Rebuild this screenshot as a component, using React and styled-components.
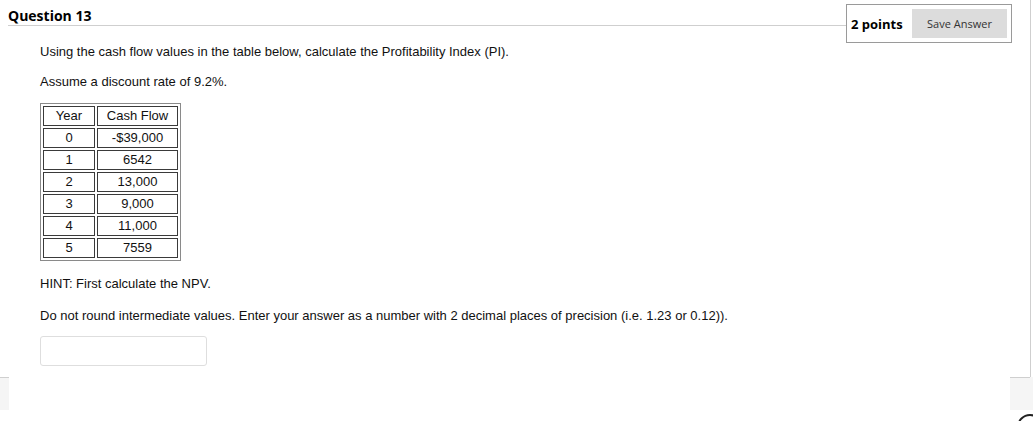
import styled, { createGlobalStyle } from "styled-components";

const GlobalStyle = createGlobalStyle`
    html, body {
        margin: 0;
        padding: 0;
        background: #fff;
    }
    body {
        font-family: "Liberation Sans", Arial, sans-serif;
        color: #111;
        overflow: hidden;
    }
`;

const Page = styled.div`
    width: 1033px;
    height: 421px;
    position: relative;
    overflow: hidden;
`;

const QuestionBlock = styled.section`
    width: 1031px;
    height: 377px;
    box-sizing: border-box;
    border-right: 1px solid #cfcfcf;
`;

const Header = styled.header`
    display: flex;
    align-items: flex-start;
    padding-left: 8px;
    padding-right: 18px;
`;

const TitleBar = styled.div`
    flex: 1;
    height: 26px;
    box-sizing: border-box;
    border-bottom: 1px solid #cfcfcf;
    display: flex;
    align-items: center;
`;

const Title = styled.h2`
    margin: 0;
    padding-top: 5px;
    font-family: "Open Sans", sans-serif;
    font-size: 14px;
    font-weight: 700;
    color: #000;
`;

const PointsBox = styled.div`
    margin-top: 4px;
    width: 166px;
    height: 39px;
    box-sizing: border-box;
    border: 1px solid #9a9a9a;
    display: flex;
    align-items: center;
    justify-content: space-between;
    padding: 0 4px 0 4px;
`;

const Points = styled.span`
    font-family: "Open Sans", sans-serif;
    font-size: 13px;
    font-weight: 700;
    color: #000;
`;

const SaveButton = styled.button`
    width: 95px;
    height: 29px;
    border: none;
    background: #dcdcdc;
    color: #333;
    font-family: "Open Sans", sans-serif;
    font-size: 11px;
    padding: 0;
`;

const Body = styled.div`
    padding-left: 40px;
    padding-top: 1px;
    font-size: 13px;
    line-height: 16px;
`;

const Para = styled.p`
    margin: 0 0 ${p => p.$gap}px 0;
`;

const Table = styled.table`
    border: 1px solid #8a8a8a;
    border-spacing: 2px;
    margin-bottom: 15px;
    font-size: 13px;
`;

const Cell = styled.td`
    border: 1px solid #3a3a3a;
    height: 18px;
    padding: 0;
    text-align: center;
    width: ${p => p.$w}px;
    line-height: 18px;
`;

const AnswerInput = styled.input`
    display: block;
    width: 167px;
    height: 30px;
    box-sizing: border-box;
    border: 1px solid #dedede;
    border-radius: 3px;
    margin: 0;
`;

const Band = styled.div`
    display: flex;
    height: 33px;
    background: #f5f5f5;
`;

const Edge = styled.div`
    width: ${p => p.$w}px;
    border-top: ${p => (p.$line ? "1px solid #cfcfcf" : "none")};
`;

const Panel = styled.div`
    width: 1001px;
    background: #fff;
`;

const FloatIcon = styled.svg`
    position: absolute;
    left: 1015px;
    top: 412px;
`;

const rows = [
    ["0", "-$39,000"],
    ["1", "6542"],
    ["2", "13,000"],
    ["3", "9,000"],
    ["4", "11,000"],
    ["5", "7559"]
];

const App = () => {
    return (
        <Page>
            <GlobalStyle />
            <QuestionBlock>
                <Header>
                    <TitleBar>
                        <Title>Question 13</Title>
                    </TitleBar>
                    <PointsBox>
                        <Points>2 points</Points>
                        <SaveButton>Save Answer</SaveButton>
                    </PointsBox>
                </Header>
                <Body>
                    <Para $gap={14}>Using the cash flow values in the table below, calculate the Profitability Index (PI).</Para>
                    <Para $gap={13}>Assume a discount rate of 9.2%.</Para>
                    <Table>
                        <tbody>
                            <tr>
                                <Cell $w={50}>Year</Cell>
                                <Cell $w={79}>Cash Flow</Cell>
                            </tr>
                            {rows.map(([year, flow]) => (
                                <tr key={year}>
                                    <Cell $w={50}>{year}</Cell>
                                    <Cell $w={79}>{flow}</Cell>
                                </tr>
                            ))}
                        </tbody>
                    </Table>
                    <Para $gap={16}>HINT: First calculate the NPV.</Para>
                    <Para $gap={12}>Do not round intermediate values. Enter your answer as a number with 2 decimal places of precision (i.e. 1.23 or 0.12)).</Para>
                    <AnswerInput type="text" />
                </Body>
            </QuestionBlock>
            <Band>
                <Edge $w={9} $line />
                <Panel />
                <Edge $w={20} $line />
                <Edge $w={3} />
            </Band>
            <FloatIcon width="30" height="30" viewBox="0 0 30 30">
                <circle cx="15" cy="15" r="12" fill="none" stroke="#222" strokeWidth="2" />
            </FloatIcon>
        </Page>
    );
};

export default App;
